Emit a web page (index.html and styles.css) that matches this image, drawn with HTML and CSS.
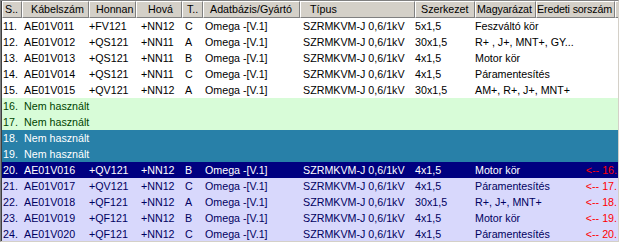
FILE: index.html
```html
<!DOCTYPE html>
<html>
<head>
<meta charset="utf-8">
<link rel="stylesheet" href="styles.css">
</head>
<body>
<div class="grid">
  <div class="hdr">
    <div class="hc c-s">S..</div>
    <div class="hc c-kab">Kábelszám</div>
    <div class="hc c-hon">Honnan</div>
    <div class="hc c-hov">Hová</div>
    <div class="hc c-t">T..</div>
    <div class="hc c-adat">Adatbázis/Gyártó</div>
    <div class="hc c-tip">Típus</div>
    <div class="hc c-sz">Szerkezet</div>
    <div class="hc c-mag">Magyarázat</div>
    <div class="hc c-ered">Eredeti sorszám</div>
    <div class="hc c-rest"></div>
  </div>
  <div class="rows">
    <div class="row white"><span>11.</span><span>AE01V011</span><span>+FV121</span><span>+NN12</span><span>C</span><span>Omega -[V.1]</span><span>SZRMKVM-J 0,6/1kV</span><span>5x1,5</span><span>Feszváltó kör</span><span></span></div>
    <div class="row white"><span>12.</span><span>AE01V012</span><span>+QS121</span><span>+NN11</span><span>A</span><span>Omega -[V.1]</span><span>SZRMKVM-J 0,6/1kV</span><span>30x1,5</span><span>R+ , J+, MNT+, GY...</span><span></span></div>
    <div class="row white"><span>13.</span><span>AE01V013</span><span>+QS121</span><span>+NN11</span><span>B</span><span>Omega -[V.1]</span><span>SZRMKVM-J 0,6/1kV</span><span>4x1,5</span><span>Motor kör</span><span></span></div>
    <div class="row white"><span>14.</span><span>AE01V014</span><span>+QS121</span><span>+NN11</span><span>C</span><span>Omega -[V.1]</span><span>SZRMKVM-J 0,6/1kV</span><span>4x1,5</span><span>Páramentesítés</span><span></span></div>
    <div class="row white"><span>15.</span><span>AE01V015</span><span>+QV121</span><span>+NN12</span><span>A</span><span>Omega -[V.1]</span><span>SZRMKVM-J 0,6/1kV</span><span>30x1,5</span><span>AM+, R+, J+, MNT+</span><span></span></div>
    <div class="row green"><span>16.</span><span class="span">Nem használt</span></div>
    <div class="row green"><span>17.</span><span class="span">Nem használt</span></div>
    <div class="row teal"><span>18.</span><span class="span">Nem használt</span></div>
    <div class="row teal"><span>19.</span><span class="span">Nem használt</span></div>
    <div class="row sel"><span>20.</span><span>AE01V016</span><span>+QV121</span><span>+NN12</span><span>B</span><span>Omega -[V.1]</span><span>SZRMKVM-J 0,6/1kV</span><span>4x1,5</span><span>Motor kör</span><span class="orig">&lt;-- 16.</span></div>
    <div class="row lav"><span>21.</span><span>AE01V017</span><span>+QV121</span><span>+NN12</span><span>C</span><span>Omega -[V.1]</span><span>SZRMKVM-J 0,6/1kV</span><span>4x1,5</span><span>Páramentesítés</span><span class="orig">&lt;-- 17.</span></div>
    <div class="row lav"><span>22.</span><span>AE01V018</span><span>+QF121</span><span>+NN12</span><span>A</span><span>Omega -[V.1]</span><span>SZRMKVM-J 0,6/1kV</span><span>30x1,5</span><span>R+, J+, MNT+</span><span class="orig">&lt;-- 18.</span></div>
    <div class="row lav"><span>23.</span><span>AE01V019</span><span>+QF121</span><span>+NN12</span><span>B</span><span>Omega -[V.1]</span><span>SZRMKVM-J 0,6/1kV</span><span>4x1,5</span><span>Motor kör</span><span class="orig">&lt;-- 19.</span></div>
    <div class="row lav"><span>24.</span><span>AE01V020</span><span>+QF121</span><span>+NN12</span><span>C</span><span>Omega -[V.1]</span><span>SZRMKVM-J 0,6/1kV</span><span>4x1,5</span><span>Páramentesítés</span><span class="orig">&lt;-- 20.</span></div>
  </div>
</div>
</body>
</html>
```
FILE: styles.css
```css
* { box-sizing: border-box; }
html, body { margin: 0; padding: 0; background: #d4d0c8; }
body { width: 619px; height: 242px; overflow: hidden; }

.grid {
  width: 619px;
  height: 242px;
  border-top: 1px solid #808080;
  border-left: 1px solid #808080;
  border-right: 1px solid #d4d0c8;
  border-bottom: 1px solid #d4d0c8;
  background: #ffffff;
  overflow: hidden;
  font-family: "Liberation Sans", Arial, sans-serif;
  font-size: 10.7px;
  color: #000;
  display: flex;
  flex-direction: column;
}

.hdr {
  display: grid;
  grid-template-columns: 20px 67px 47px 46px 21px 97px 115px 60px 61px 79px 1fr;
  height: 17px;
  flex: none;
  border-left: 1px solid #404040;
}
.hc {
  background: #d4d0c8;
  border-top: 1px solid #ffffff;
  border-left: 1px solid #ffffff;
  border-right: 1px solid #808080;
  border-bottom: 1px solid #808080;
  box-shadow: 1px 1px 0 #404040;
  line-height: 14px;
  white-space: nowrap;
  overflow: hidden;
  padding-left: 2px;
  color: #000;
}
.c-kab { padding-left: 8px; }
.c-hon { padding-left: 6px; }
.c-hov { padding-left: 11px; }
.c-t { padding-left: 4px; }
.c-adat { padding-left: 6px; }
.c-tip { padding-left: 9px; }
.c-sz { padding-left: 5px; }
.c-mag { padding-left: 1px; letter-spacing: -0.1px; }
.c-ered { padding-left: 0; letter-spacing: -0.15px; }
.c-rest { box-shadow: none; border-right: none; }

.rows {
  flex: 1;
  border-left: 1px solid #404040;
  overflow: hidden;
}
.row {
  display: grid;
  grid-template-columns: 21px 65px 52px 44px 20px 98px 112px 60px 62px 1fr;
  height: 16px;
  line-height: 16px;
  white-space: nowrap;
}
.row > span { overflow: visible; padding-left: 1px; }
.row > span.span { grid-column: 2 / -1; }

.white { background: #ffffff; color: #000000; }
.green { background: #d8fcd8; color: #004400; }
.teal { background: #2880a8; color: #ffffff; }
.sel { background: #000080; color: #ffffff; }
.lav { background: #d8d8fc; color: #000060; }

.orig { color: #ff0000; text-align: right; padding-right: 1px; }
```
